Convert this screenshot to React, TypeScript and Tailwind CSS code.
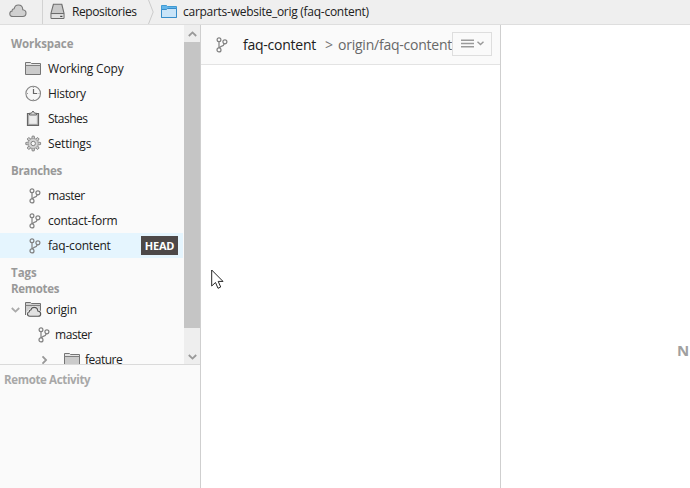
import React from 'react';

function BranchIcon({ className = '' }: { className?: string }) {
  return (
    <svg width="12" height="16" viewBox="0 0 12 16" fill="none" stroke="#808080" strokeWidth="1.2" className={`shrink-0 ${className}`}>
      <circle cx="3" cy="2.7" r="1.9" />
      <circle cx="8.9" cy="4.8" r="2" />
      <circle cx="3" cy="12.9" r="2" />
      <path d="M3 4.6V10.9M3.5 10.8L5.2 9.4C7 9 8 8.4 8.3 6.7" />
    </svg>
  );
}

function FolderIcon({ className = '' }: { className?: string }) {
  return (
    <svg width="17" height="14" viewBox="0 0 17 14" className={`shrink-0 ${className}`}>
      <path d="M.5 12.5V.5H5.5L6.5 1.5H15.5V12.5Z" fill="#e4e4e4" stroke="#757575" />
      <path d="M1 4H15V12H1Z" fill="#cbcbcb" />
      <path d="M.5 3.5H15.5" fill="none" stroke="#808080" />
    </svg>
  );
}

function BlueFolderIcon() {
  return (
    <svg width="17" height="14" viewBox="0 0 17 14" className="shrink-0">
      <path d="M.5 12.5V.5H5.5L6.5 1.5H15.5V12.5Z" fill="#62b5ea" stroke="#409bd3" />
      <path d="M.5 12.5V4.5H5.5L6.5 3.5H15.5V12.5Z" fill="#c9e4f8" stroke="#378dca" />
    </svg>
  );
}

function CloudIcon() {
  return (
    <svg width="18" height="14" viewBox="0 0 18 14" className="shrink-0">
      <path d="M4 12.5C1.9 12.5.8 11.3.8 9.7C.8 8.2 1.8 7.2 3.1 7C3 5.8 3.8 4.8 5.1 4.8C5.6 2.4 7.2 1 9.3 1C11.9 1 13.7 2.8 13.8 5.7C15.9 5.9 17 7.2 17 9.1C17 11.3 15.8 12.5 13.7 12.5Z" fill="#d0d0d0" stroke="#777" strokeWidth="1.1" />
    </svg>
  );
}

function DriveIcon() {
  return (
    <svg width="16" height="17" viewBox="0 0 16 17" className="shrink-0">
      <path d="M3.4 1.3H11.8L14 10.2V14.8Q14 15.5 13.3 15.5H1.7Q1 15.5 1 14.8V10.2Z" fill="#c9c9c9" stroke="#6b6b6b" strokeWidth="1.1" />
      <path d="M1.1 10.5H13.9" stroke="#6b6b6b" />
      <path d="M1.7 11.2H13.3V15H1.7Z" fill="#e1e1e1" />
      <path d="M10.2 13.4H12.4" stroke="#444" strokeWidth="1.2" />
    </svg>
  );
}

function ClockIcon() {
  return (
    <svg width="17" height="17" viewBox="0 0 17 17" fill="none" className="shrink-0">
      <circle cx="8.2" cy="8.5" r="7.3" fill="#f7f7f7" stroke="#858585" strokeWidth="1.1" />
      <path d="M8.5 4V8.5H12.2" stroke="#666" strokeWidth="1.2" />
      <path d="M8.3 2V3M8.3 14V15M2 8.5H3M13.5 8.5H14.5" stroke="#999" />
    </svg>
  );
}

function ClipboardIcon() {
  return (
    <svg width="17" height="17" viewBox="0 0 17 17" className="shrink-0">
      <path d="M2.5 3.5H13.5V15.3H2.5Z" fill="#b8b8b8" stroke="#666" strokeWidth="1.2" />
      <path d="M4.2 5H11.8V13.8H4.2Z" fill="#ececec" />
      <path d="M4.5 5V3.2H6.3L8 1L9.7 3.2H11.5V5Z" fill="#d5d5d5" stroke="#666" />
    </svg>
  );
}

const teeth = [0, 45, 90, 135, 180, 225, 270, 315];

function GearIcon() {
  return (
    <svg width="17" height="17" viewBox="0 0 17 17" className="shrink-0">
      {teeth.map((angle) => (
        <path key={angle} d="M6.7 3.7L7.2 .8H9.2L9.7 3.7" fill="#d0d0d0" stroke="#808080" strokeWidth=".9" transform={`translate(0 .3) rotate(${angle} 8.2 8.2)`} />
      ))}
      <circle cx="8.2" cy="8.5" r="5" fill="#d3d3d3" stroke="#959595" strokeWidth=".8" />
      <circle cx="8.2" cy="8.5" r="2.2" fill="#f8f8f8" stroke="#808080" />
    </svg>
  );
}

const smallCloud = 'M4.8 15.2C3.3 15.2 2.5 14.3 2.5 13C2.5 11.8 3.1 11 4.3 10.8C4.2 9.6 5 9 5.8 9C6.2 7.3 7.4 6.4 9.1 6.4C11.3 6.4 12.7 7.8 12.8 10C14.7 10.2 15.7 11.2 15.7 12.9C15.7 14.4 14.8 15.2 13.1 15.2Z';

function RemoteFolderIcon() {
  return (
    <svg width="17" height="17" viewBox="0 0 17 17" className="shrink-0">
      <path d="M.5 14V1.5H5.5L6.5 2.5H15.5V14" fill="#cfcfcf" stroke="#707070" />
      <path d="M.5 4.5H15.5" fill="none" stroke="#808080" />
      <path d={smallCloud} fill="#fafafa" stroke="#fafafa" strokeWidth="2.4" />
      <path d={smallCloud} fill="#e2e2e2" stroke="#555" strokeWidth="1.1" />
    </svg>
  );
}

function Chevron({ className = '' }: { className?: string }) {
  return (
    <svg width="9" height="6" viewBox="0 0 9 6" fill="none" stroke="currentColor" strokeWidth="1.8" className={`shrink-0 ${className}`}>
      <path d="M.8 1L4.5 4.6L8.2 1" />
    </svg>
  );
}

function Row({ icon, label, spacing = '', selected = false }: { icon: React.ReactNode; label: string; spacing?: string; selected?: boolean }) {
  return (
    <div className={`flex h-[25px] items-center pl-[25px] ${selected ? 'mr-px bg-[#e5f5fe]' : ''}`}>
      <span className="flex w-[23px] shrink-0 items-center">{icon}</span>
      <span className={spacing}>{label}</span>
      {selected && <span className="mr-[5px] ml-auto flex h-[19px] w-[37px] items-center justify-center bg-[#4d4848] text-[11px] font-bold tracking-[-0.2px] text-white">HEAD</span>}
    </div>
  );
}

export default function App() {
  return (
    <div className="flex h-[488px] w-[690px] flex-col overflow-hidden bg-white font-['Open_Sans','Noto_Sans',sans-serif] text-[12px] leading-4 whitespace-nowrap text-[#202020]">
      <header className="flex h-[25px] shrink-0 border-b border-[#dedede] bg-[#efefef]">
        <div className="flex w-[43px] items-center border-r border-[#d2d2d2] pb-0.5 pl-[9px]"><CloudIcon /></div>
        <div className="flex w-[105px] items-center pb-px pl-[7px]">
          <DriveIcon />
          <span className="ml-[6px] tracking-[-0.4px]">Repositories</span>
        </div>
        <svg width="6" height="24" viewBox="0 0 6 24" fill="none" stroke="#cbcbcb"><path d="M.5 0L5.2 12L.5 24" /></svg>
        <div className="flex items-center pb-px pl-[7px]">
          <BlueFolderIcon />
          <span className="ml-[5px] tracking-[-0.27px]">carparts-website_orig (faq-content)</span>
        </div>
      </header>
      <div className="flex min-h-0 flex-1">
        <aside className="flex w-[201px] shrink-0 flex-col border-r border-[#cfcfcf] bg-[#fafafa]">
          <div className="flex h-[340px] shrink-0 overflow-hidden border-b border-[#dadada]">
            <nav className="w-[184px] overflow-hidden">
              <h2 className="h-[31px] pt-[11px] pl-[11px] text-[11.5px] font-bold tracking-[-0.1px] text-[#999]">Workspace</h2>
              <Row icon={<FolderIcon />} label="Working Copy" spacing="tracking-[-0.18px]" />
              <Row icon={<ClockIcon />} label="History" spacing="tracking-[-0.32px]" />
              <Row icon={<ClipboardIcon />} label="Stashes" spacing="tracking-[-0.52px]" />
              <Row icon={<GearIcon />} label="Settings" spacing="tracking-[-0.15px]" />
              <h2 className="h-[27px] pt-[7px] pl-[11px] text-[11.5px] font-bold tracking-[-0.3px] text-[#999]">Branches</h2>
              <Row icon={<BranchIcon className="ml-1" />} label="master" spacing="tracking-[-0.45px]" />
              <Row icon={<BranchIcon className="ml-1" />} label="contact-form" spacing="tracking-[-0.25px]" />
              <Row icon={<BranchIcon className="ml-1" />} label="faq-content" spacing="tracking-[-0.2px]" selected />
              <h2 className="mt-[7px] h-4 pl-[11px] text-[11.5px] font-bold text-[#999]">Tags</h2>
              <h2 className="h-4 pl-[11px] text-[11.5px] font-bold tracking-[-0.3px] text-[#999]">Remotes</h2>
              <div className="flex h-[25px] items-center pl-[11px] text-[#aaa]">
                <Chevron />
                <span className="ml-[5px]"><RemoteFolderIcon /></span>
                <span className="ml-[4px] tracking-[-0.2px] text-[#202020]">origin</span>
              </div>
              <div className="flex h-[25px] items-center pl-[38px]"><BranchIcon /><span className="ml-[5px] tracking-[-0.45px]">master</span></div>
              <div className="flex h-[25px] items-center pl-[40px] text-[#999]">
                <Chevron className="-rotate-90" />
                <FolderIcon className="ml-[15px]" />
                <span className="ml-[4px] tracking-[-0.5px] text-[#202020]">feature</span>
              </div>
            </nav>
            <div className="flex w-4 flex-col bg-[#eee] text-[#999]">
              <div className="flex h-[17px] items-center justify-center"><Chevron className="rotate-180" /></div>
              <div className="h-[286px] bg-[#c5c5c5]" />
              <div className="flex flex-1 items-center justify-center pt-[22px]"><Chevron /></div>
            </div>
          </div>
          <h2 className="pt-[7px] pl-[4px] text-[11.5px] font-bold tracking-[-0.35px] text-[#a8a8a8]">Remote Activity</h2>
        </aside>
        <main className="w-[300px] shrink-0 border-r border-[#cfcfcf]">
          <div className="flex h-10 items-center border-b border-[#e3e3e3] bg-[#fafafa] pl-[15px]">
            <BranchIcon />
            <span className="ml-[15px] w-[82px] text-[14px] tracking-[-0.25px]">faq-content</span>
            <span className="w-[13px] text-[14px] text-[#777]">&gt;</span>
            <span className="w-[114px] text-[14px] tracking-[-0.23px] text-[#686868]">origin/faq-content</span>
            <button className="-mt-0.5 flex h-6 w-10 shrink-0 items-center border border-[#dedede] bg-[#fafafa] pl-2 text-[#999]">
              <svg width="13" height="9" viewBox="0 0 13 9" className="shrink-0" stroke="#9a9a9a" strokeWidth="1.6"><path d="M0 1.3H13M0 4.5H13M0 7.7H13" /></svg>
              <svg width="7" height="5" viewBox="0 0 7 5" fill="none" stroke="currentColor" strokeWidth="1.4" className="ml-[3px] shrink-0"><path d="M.5 .8L3.5 3.6L6.5 .8" /></svg>
            </button>
          </div>
        </main>
        <section className="min-w-0 flex-1 overflow-hidden pt-[317px] pl-[176px]">
          <span className="text-[15px] font-bold text-[#a0a0a0]">N</span>
        </section>
      </div>
      <svg className="absolute top-[269px] left-[211px]" width="13" height="22" viewBox="0 0 13 22">
        <path d="M.7 1V17L4.5 13.5L7 19.3L9.7 18L7.2 12.4H12Z" fill="white" stroke="#252525" />
      </svg>
    </div>
  );
}
